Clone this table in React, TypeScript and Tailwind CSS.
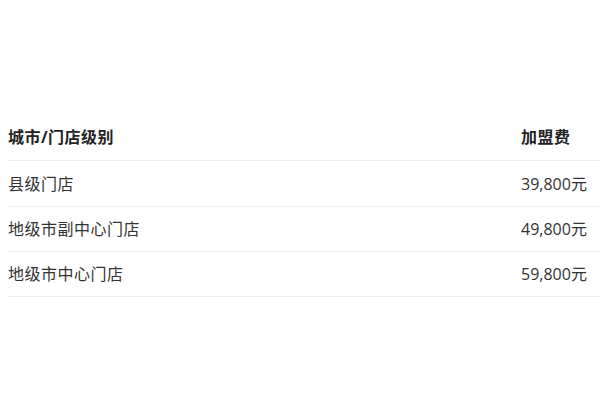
const rows = [
  { level: "县级门店", fee: "39,800元", h: "h-[46px]" },
  { level: "地级市副中心门店", fee: "49,800元", h: "h-[45px]" },
  { level: "地级市中心门店", fee: "59,800元", h: "h-[45px]" },
];

export default function App() {
  return (
    <div className="w-[600px] h-[400px] bg-white pt-[114px] pl-2 font-['Open_Sans','Noto_Sans_CJK_SC',sans-serif] text-[16px] text-[#333]">
      <div className="grid grid-cols-[1fr_79px] h-[47px] items-center border-b border-[#eeeeee] font-bold text-[#222] tracking-[0.5px]">
        <div>城市/门店级别</div>
        <div>加盟费</div>
      </div>
      {rows.map((r) => (
        <div
          key={r.level}
          className={`grid grid-cols-[1fr_79px] items-center border-b border-[#eeeeee] ${r.h}`}
        >
          <div className="tracking-[0.5px]">{r.level}</div>
          <div>{r.fee}</div>
        </div>
      ))}
    </div>
  );
}
